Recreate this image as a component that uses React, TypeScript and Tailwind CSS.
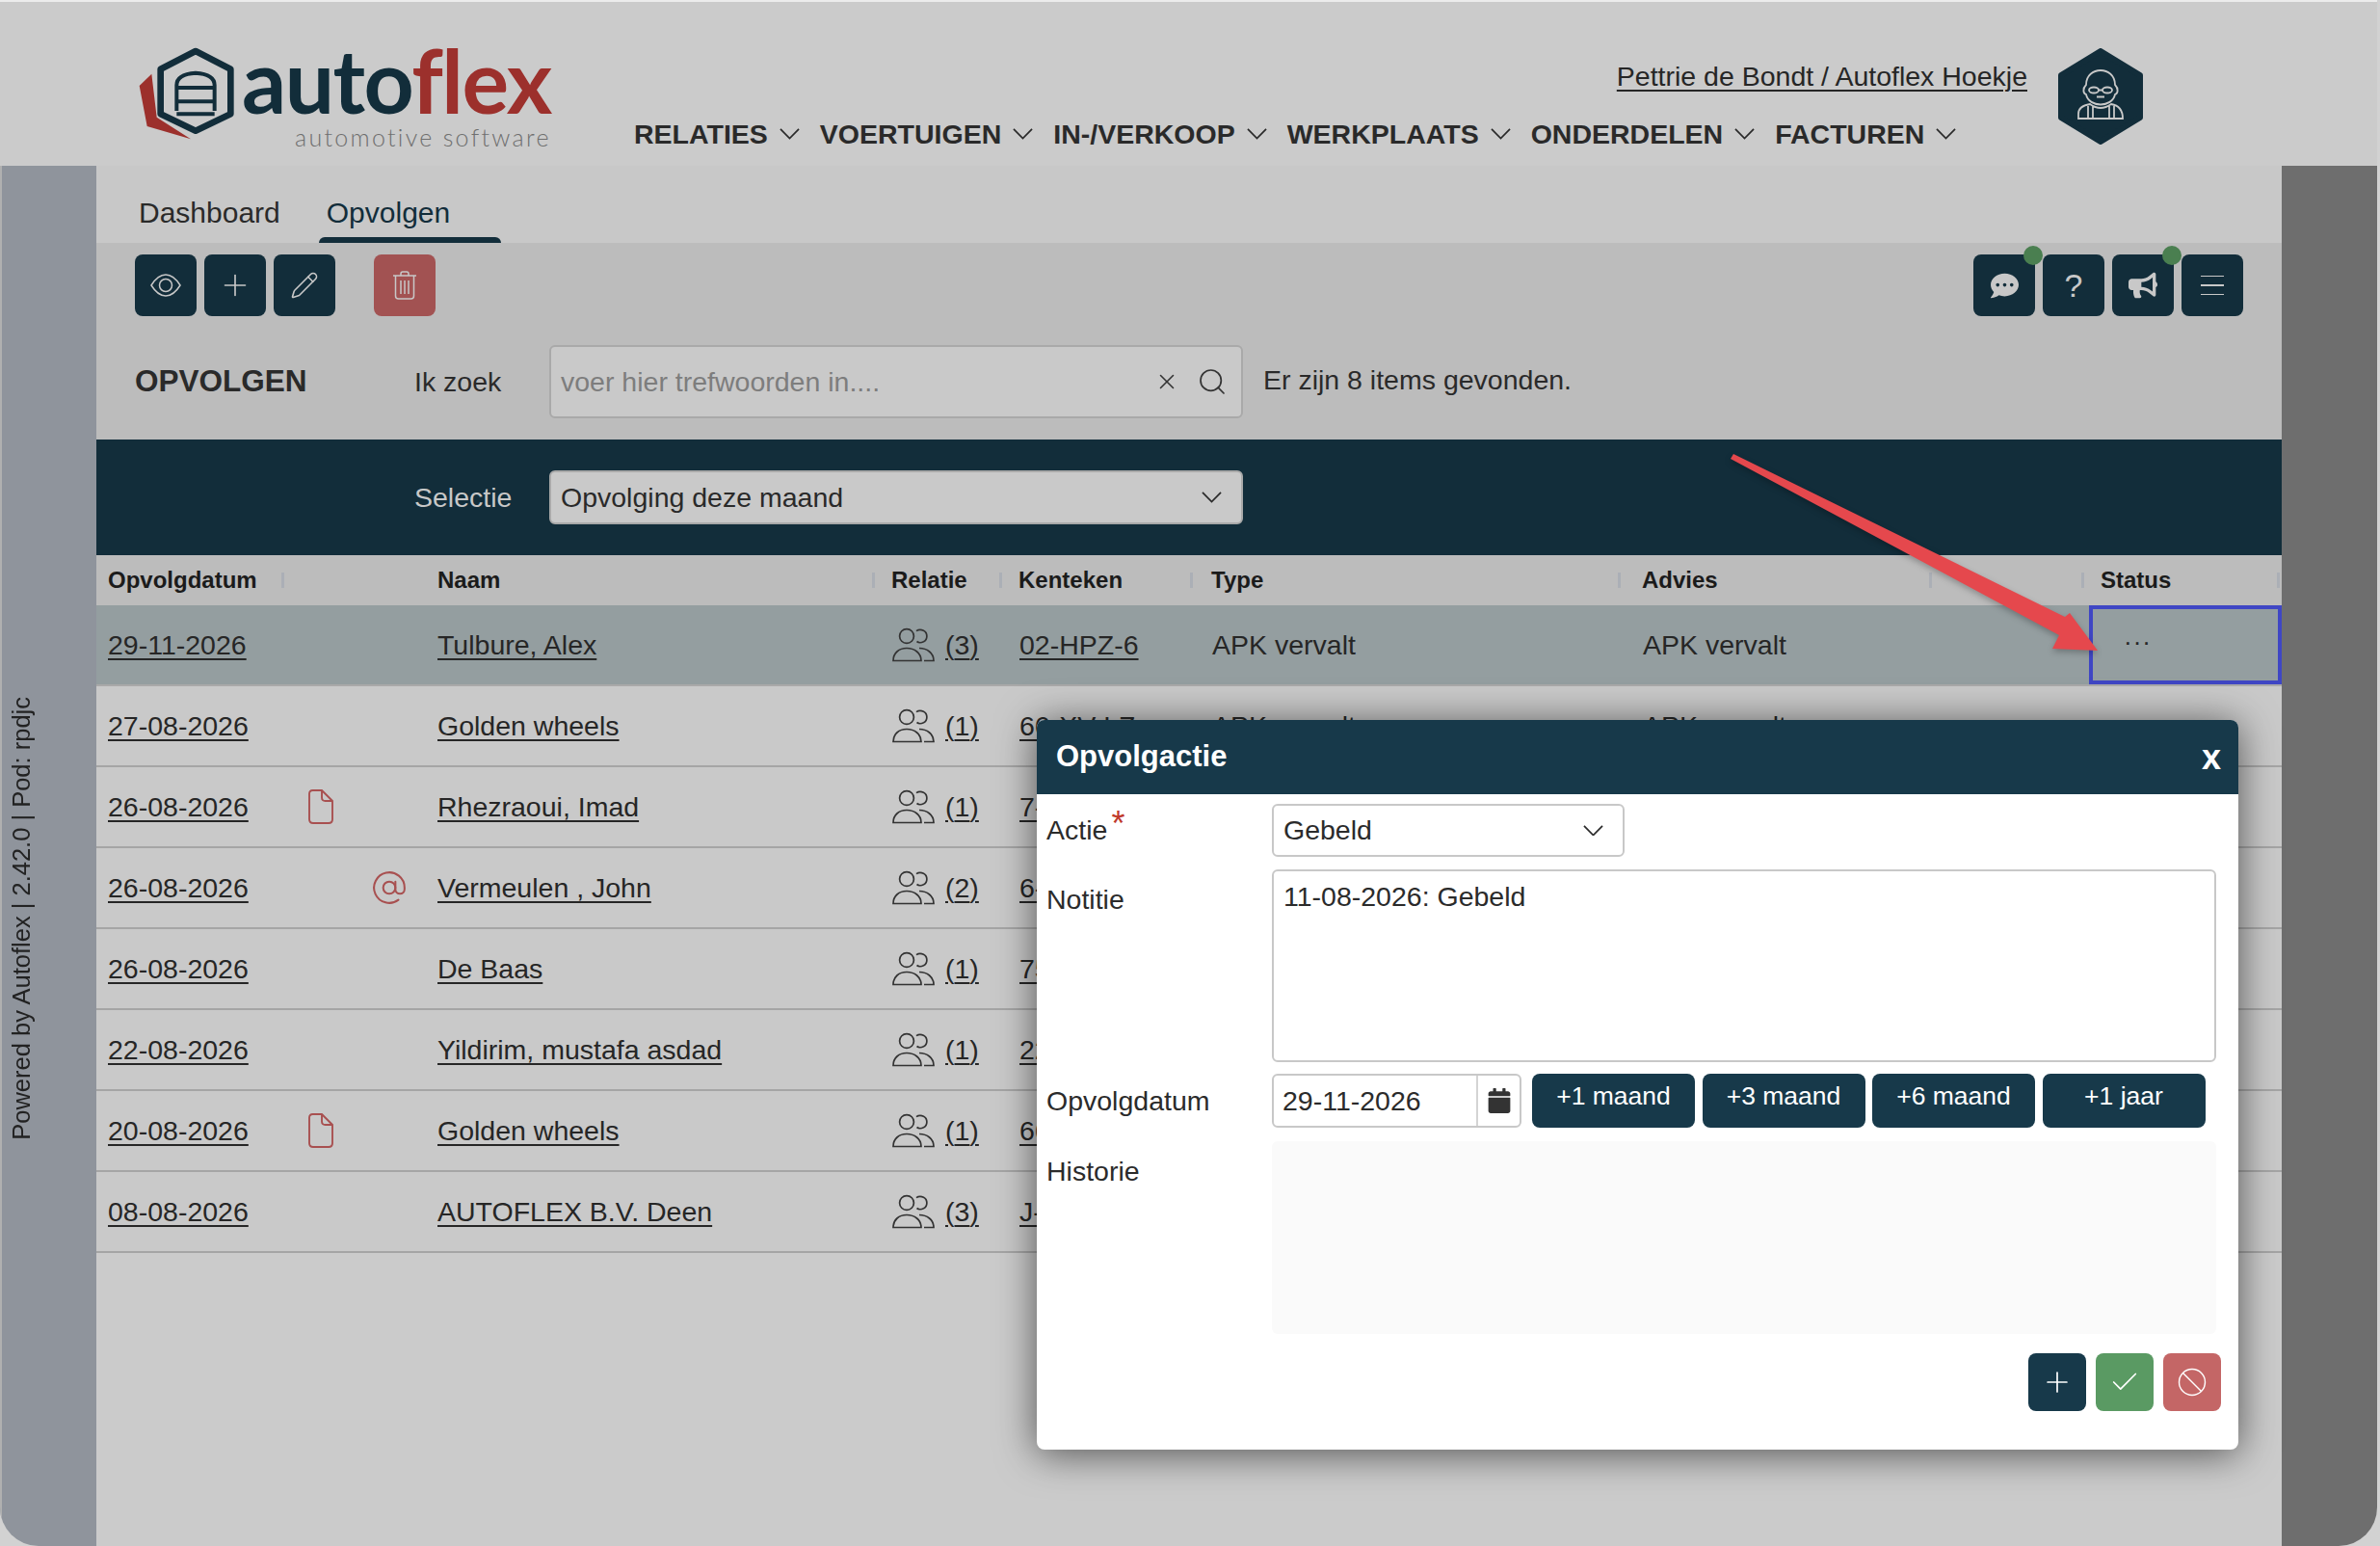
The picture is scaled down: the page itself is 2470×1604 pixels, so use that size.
import { Check, ChevronDown, AtSign, Pencil, Plus, Search, X } from 'lucide-react';
import { FaBullhorn, FaCalendar, FaCommentDots } from 'react-icons/fa';

const rows = [
  { date: '29-11-2026', name: 'Tulbure, Alex', count: 3, plate: '02-HPZ-6', selected: true },
  { date: '27-08-2026', name: 'Golden wheels', count: 1, plate: '66-XV-LZ' },
  { date: '26-08-2026', name: 'Rhezraoui, Imad', count: 1, plate: '7-ZTT-45', file: true },
  { date: '26-08-2026', name: 'Vermeulen , John', count: 2, plate: '6-KVB-12', mail: true },
  { date: '26-08-2026', name: 'De Baas', count: 1, plate: '75-RL-JX' },
  { date: '22-08-2026', name: 'Yildirim, mustafa asdad', count: 1, plate: '22-GN-BF' },
  { date: '20-08-2026', name: 'Golden wheels', count: 1, plate: '66-XV-LZ', file: true },
  { date: '08-08-2026', name: 'AUTOFLEX B.V. Deen', count: 3, plate: 'J-482-VX' },
];

const nav = ['RELATIES', 'VOERTUIGEN', 'IN-/VERKOOP', 'WERKPLAATS', 'ONDERDELEN', 'FACTUREN'];

function Chev({ w = 21 }: { w?: number }) {
  return (
    <svg width={w} height={(w * 12) / 22} viewBox="0 0 22 12" fill="none" stroke="#2a2a2a" strokeWidth="1.8">
      <polyline points="1,1 11,11 21,1" />
    </svg>
  );
}

function Logo() {
  return (
    <div className="flex items-start">
      <svg width="104" height="104" viewBox="60 60 312 312" className="shrink-0">
        <path d="M106 155 L68 192 L92 318 L228 358 L122 290 Z" fill="#9c302c" />
        <path d="M243 84 L352 140 V280 L243 332 L134 280 V140 Z" fill="none" stroke="#122d3a" strokeWidth="20" strokeLinejoin="round" />
        <path d="M184 270 V190 Q184 156 243 152 Q302 156 302 190 V270" fill="none" stroke="#122d3a" strokeWidth="12" />
        <path d="M184 198 H302 M184 241 H302 M184 280 H302" stroke="#122d3a" strokeWidth="12" />
      </svg>
      <div className="ml-[5px] flex flex-col items-end">
        <div className="mt-[-9px] h-[94px] font-['Lato',sans-serif] text-[91px] leading-[94px] font-bold tracking-[-1.5px] whitespace-nowrap">
          <span className="text-[#122d3a]">auto</span>
          <span className="text-[#9c302c]">flex</span>
        </div>
        <div className="mt-[-3px] font-['Lato',sans-serif] text-[25px] leading-[30px] font-light tracking-[2.3px] whitespace-nowrap text-[#6f6f6f]">
          automotive software
        </div>
      </div>
    </div>
  );
}

function Avatar() {
  return (
    <svg width="88" height="100" viewBox="0 0 88 100" fill="none" className="shrink-0">
      <path d="M44 3 L85 28 V72 L44 97 L3 72 V28 Z" fill="#122d3a" stroke="#122d3a" strokeWidth="6" strokeLinejoin="round" />
      <g stroke="#c8c8c8" strokeWidth="1.8">
        <path d="M29 38 C29 18 59 18 59 38 C63 42 62 47 59 48 C56 62 32 62 29 48 C26 47 25 42 29 38 Z" />
        <ellipse cx="37" cy="43.5" rx="5" ry="3" />
        <ellipse cx="51" cy="43.5" rx="5" ry="3" />
        <path d="M42 43.5 H46 M40 50.5 H48" />
        <path d="M21 73 V68 Q21 60 33 58 Q44 66 55 58 Q67 60 67 73 Z M31 60 V73 M36 60 V73 M53 60 V73 M58 60 V73" />
      </g>
    </svg>
  );
}

function ToolButton({ children, red }: { children: React.ReactNode; red?: boolean }) {
  return (
    <div className={`flex h-16 items-center justify-center rounded-lg text-[#c8c8c8] ${red ? 'w-16 bg-[#a25252]' : 'w-16 bg-[#122d3a]'}`}>
      {children}
    </div>
  );
}

function Dot() {
  return <span className="absolute top-[-9px] right-[-8px] h-5 w-5 rounded-full bg-[#4a7f50]" />;
}

function PeopleIcon() {
  return (
    <svg width="44" height="36" viewBox="0 0 44 36" fill="none" stroke="#333" strokeWidth="1.7" className="shrink-0">
      <circle cx="15" cy="9" r="7.4" />
      <path d="M25 3.6 C27 2.2 30 2 32.5 3.2 C37 5.5 37 12.5 32.5 14.8 C30 16 27 15.8 25.5 14.5" />
      <path d="M1 34.5 C1 26.5 7 21.5 15 21.5 C23 21.5 30 26.5 30 34.5 Z" />
      <path d="M28 21.5 C36 21.5 43 26.5 43 34.5 H33" />
    </svg>
  );
}

function FileIcon() {
  return (
    <svg width="26" height="36" viewBox="0 0 26 36" fill="none" stroke="#a85050" strokeWidth="1.9">
      <path d="M4.5 1 H14 L25 12 V31 Q25 35 21 35 H5 Q1 35 1 31 V4.5 Q1 1 4.5 1 Z M14 1 V8.5 Q14 12 17.5 12 H25" />
    </svg>
  );
}

function Sep() {
  return <span className="h-4 w-[3px] shrink-0 bg-[#abafb6]" />;
}

function Table() {
  return (
    <div className="text-[#262626]">
      <div className="grid h-[52px] grid-cols-[200px_142px_471px_132px_200px_447px_476px_200px] items-center bg-[#bcbcbc] text-[24px] font-bold text-[#1b1b1b]">
        <div className="flex items-center justify-between pl-3 pr-[5px]">Opvolgdatum<Sep /></div>
        <div />
        <div className="flex items-center justify-between pl-3 pr-[5px]">Naam<Sep /></div>
        <div className="flex items-center justify-between pl-3 pr-[5px]">Relatie<Sep /></div>
        <div className="flex items-center justify-between pl-3 pr-[7px]">Kenteken<Sep /></div>
        <div className="flex items-center justify-between pl-3 pr-[10px]">Type<Sep /></div>
        <div className="flex items-center pl-3 pr-[5px]">
          <span className="w-[298px]">Advies</span>
          <Sep />
          <span className="flex-1" />
          <Sep />
        </div>
        <div className="flex items-center justify-between pl-3 pr-[2px]">Status<Sep /></div>
      </div>
      {rows.map((r, i) => (
        <div
          key={i}
          className={`grid h-[84px] grid-cols-[342px_471px_132px_200px_447px_476px_200px] items-center border-b-2 text-[28.5px] ${
            r.selected ? 'border-[#a9a9a9] bg-[#949ea0]' : 'border-[#a5a5a5] bg-[#c9c9c9]'
          }`}
        >
          <div className="flex items-center pl-3">
            <span className="w-[208px] underline decoration-2 underline-offset-[4px]">{r.date}</span>
            <span className="w-[65px]">{r.file && <FileIcon />}</span>
            {r.mail && <AtSign size={38} strokeWidth={1.3} color="#a85050" />}
          </div>
          <div className="pl-3 underline decoration-2 underline-offset-[4px]">{r.name}</div>
          <div className="flex items-center pl-[13px]">
            <PeopleIcon />
            <span className="ml-[11px] underline decoration-2 underline-offset-[4px]">({r.count})</span>
          </div>
          <div className="pl-[13px] underline decoration-2 underline-offset-[4px]">{r.plate}</div>
          <div className="pl-[13px]">APK vervalt</div>
          <div className="pl-[13px]">APK vervalt</div>
          {r.selected ? (
            <div className="flex h-full items-center border-4 border-[#3f46c4] pl-[32px] text-[26px] leading-none tracking-[1px] pb-[6px]">···</div>
          ) : (
            <div />
          )}
        </div>
      ))}
    </div>
  );
}

function MonthButton({ label }: { label: string }) {
  return (
    <div className="flex h-14 w-[169px] justify-center rounded-lg bg-[#17394a] pt-[7px] text-[26.5px] leading-[32px] text-white">
      {label}
    </div>
  );
}

function Modal() {
  return (
    <div className="absolute top-[747px] left-[1076px] h-[757px] w-[1247px] overflow-hidden rounded-lg bg-white text-[28.5px] text-[#2b2b2b] shadow-[0_4px_40px_rgba(0,0,0,0.6)]">
      <div className="flex h-[77px] items-center justify-between bg-[#17394a] pr-[18px] pl-5 text-white">
        <span className="text-[31px] font-bold">Opvolgactie</span>
        <span className="text-[36px] leading-none font-bold">x</span>
      </div>
      <div className="pt-[10px] pl-[10px]">
        <div className="flex h-[55px]">
          <div className="flex w-[234px] items-center">
            Actie
            <span className="ml-1 mt-[-14px] text-[36px] leading-none text-[#c0392b]">*</span>
          </div>
          <div className="flex w-[366px] items-center justify-between rounded-md border-2 border-[#c8c8c8] pr-5 pl-[10px]">
            Gebeld
            <Chev />
          </div>
        </div>
        <div className="mt-[13px] flex h-[200px]">
          <div className="w-[234px] pt-[10px]">Notitie</div>
          <div className="w-[980px] rounded-md border-2 border-[#c8c8c8] pt-[5px] pl-[10px]">11-08-2026: Gebeld</div>
        </div>
        <div className="mt-3 flex h-14">
          <div className="flex w-[234px] items-center">Opvolgdatum</div>
          <div className="flex w-[259px] rounded-md border-2 border-[#c8c8c8]">
            <div className="flex w-[212px] items-center border-r-2 border-[#d4d4d4] pl-[9px]">29-11-2026</div>
            <div className="flex flex-1 items-center justify-center text-[#333]">
              <FaCalendar size={26} />
            </div>
          </div>
          <div className="ml-[11px] flex gap-[7.5px]">
            <MonthButton label="+1 maand" />
            <MonthButton label="+3 maand" />
            <MonthButton label="+6 maand" />
            <MonthButton label="+1 jaar" />
          </div>
        </div>
        <div className="mt-[14px] flex h-[200px]">
          <div className="w-[234px] pt-[10px]">Historie</div>
          <div className="w-[980px] rounded-md bg-[#fafafa]" />
        </div>
        <div className="mt-5 flex justify-end gap-[10px] pr-[18px]">
          <div className="flex h-[60px] w-[60px] items-center justify-center rounded-lg bg-[#17394a] text-white">
            <Plus size={34} strokeWidth={1.2} />
          </div>
          <div className="flex h-[60px] w-[60px] items-center justify-center rounded-lg bg-[#5a9a63] text-white">
            <Check size={34} strokeWidth={1.2} />
          </div>
          <div className="flex h-[60px] w-[60px] items-center justify-center rounded-lg bg-[#c46666] text-white">
            <svg width="30" height="30" viewBox="0 0 30 30" fill="none" stroke="#fff" strokeWidth="1.4">
              <circle cx="15" cy="15" r="13.5" />
              <path d="M5.5 5.5 L24.5 24.5" />
            </svg>
          </div>
        </div>
      </div>
    </div>
  );
}

export default function App() {
  return (
    <div className="relative h-[1604px] w-[2470px] overflow-hidden bg-[#d2d2d2] font-['Liberation_Sans',sans-serif]">
      <div className="flex h-full w-[2467px] flex-col overflow-hidden rounded-b-[40px]">
        <header className="flex h-[172px] shrink-0 border-t-2 border-[#ececec] bg-[#cbcbcb] pl-[142px]">
          <div className="w-[516px] pt-[43px]">
            <Logo />
          </div>
          <div className="w-[1446px]">
            <div className="flex justify-end pt-[60px] text-[28.5px] leading-[34px] text-[#262626]">
              <span className="underline decoration-2 underline-offset-[4px]">Pettrie de Bondt / Autoflex Hoekje</span>
            </div>
            <nav className="mt-[26px] flex gap-[21px] text-[28.5px] leading-[34px] font-bold text-[#2a2a2a]">
              {nav.map((n) => (
                <div key={n} className="flex items-center gap-[12px]">
                  {n}
                  <Chev />
                </div>
              ))}
            </nav>
          </div>
          <div className="ml-8 pt-[48px]">
            <Avatar />
          </div>
        </header>

        <div className="flex min-h-0 flex-1">
          <aside className="flex w-[100px] shrink-0 items-end border-l-2 border-[#b0b0b0] bg-[#8f949c] pb-[421px]">
            <span className="rotate-180 pr-[5px] text-[25.5px] leading-[30px] whitespace-nowrap text-[#222] [writing-mode:vertical-rl]">
              Powered by Autoflex | 2.42.0 | Pod: rpdjc
            </span>
          </aside>

          <main className="w-[2268px] shrink-0 bg-[#cbcbcb]">
            <div className="flex h-[80px] items-end gap-[31px] bg-[#c8c8c8] pl-[35px]">
              <div className="px-[9px] pb-[13px] text-[30px] leading-[36px] text-[#2a2a2a]">Dashboard</div>
              <div className="flex flex-col">
                <div className="px-[8px] pb-[7px] text-[30px] leading-[36px] text-[#122d3a]">Opvolgen</div>
                <div className="h-[6px] w-[189px] rounded-t-md bg-[#122d3a]" />
              </div>
            </div>

            <div className="h-[204px] bg-[#bcbcbc] px-10 pt-3">
              <div className="flex justify-between">
                <div className="flex gap-2">
                  <ToolButton>
                    <svg width="34" height="26" viewBox="0 0 34 26" fill="none" stroke="#c8c8c8" strokeWidth="1.5">
                      <path d="M2 13 C7 5 12 2 17 2 C22 2 27 5 32 13 C27 21 22 24 17 24 C12 24 7 21 2 13 Z" />
                      <circle cx="17" cy="13" r="6.5" />
                    </svg>
                  </ToolButton>
                  <ToolButton>
                    <Plus size={36} strokeWidth={1.1} />
                  </ToolButton>
                  <ToolButton>
                    <Pencil size={30} strokeWidth={1.3} />
                  </ToolButton>
                  <div className="ml-8">
                    <ToolButton red>
                      <svg width="26" height="30" viewBox="0 0 26 30" fill="none" stroke="#c8c8c8" strokeWidth="1.5">
                        <path d="M1 5 H25 M9 5 V3 Q9 1 11 1 H15 Q17 1 17 3 V5 M3.5 5 V26 Q3.5 29 6.5 29 H19.5 Q22.5 29 22.5 26 V5 M9 10 V24 M13 10 V24 M17 10 V24" />
                      </svg>
                    </ToolButton>
                  </div>
                </div>
                <div className="flex gap-2">
                  <div className="relative">
                    <ToolButton>
                      <FaCommentDots size={29} />
                    </ToolButton>
                    <Dot />
                  </div>
                  <ToolButton>
                    <span className="text-[34px] leading-none">?</span>
                  </ToolButton>
                  <div className="relative">
                    <ToolButton>
                      <FaBullhorn size={30} />
                    </ToolButton>
                    <Dot />
                  </div>
                  <ToolButton>
                    <div className="flex w-6 flex-col gap-[8px]">
                      <span className="h-[1.5px] bg-[#c8c8c8]" />
                      <span className="h-[1.5px] bg-[#c8c8c8]" />
                      <span className="h-[1.5px] bg-[#c8c8c8]" />
                    </div>
                  </ToolButton>
                </div>
              </div>
              <div className="mt-[30px] flex h-[76px] items-center">
                <div className="w-[290px] text-[31.5px] font-bold text-[#2a2a2a]">OPVOLGEN</div>
                <div className="w-[140px] text-[28.5px] text-[#2a2a2a]">Ik zoek</div>
                <div className="flex h-full w-[720px] items-center rounded-md border-2 border-[#a9a9a9] bg-[#c9c9c9] pr-[14px] pl-[10px]">
                  <span className="flex-1 text-[28.5px] text-[#7d7d7d]">voer hier trefwoorden in....</span>
                  <X size={26} strokeWidth={1.4} color="#333" />
                  <Search size={32} strokeWidth={1.3} color="#333" className="ml-[18px]" />
                </div>
                <div className="ml-[21px] pb-[4px] text-[28.5px] text-[#2a2a2a]">Er zijn 8 items gevonden.</div>
              </div>
            </div>

            <div className="flex h-[120px] items-center bg-[#122d3a] pl-[330px]">
              <div className="w-[140px] text-[28.5px] text-[#c8c8c8]">Selectie</div>
              <div className="flex h-14 w-[720px] items-center justify-between rounded-md border-2 border-[#a9a9a9] bg-[#c9c9c9] pr-5 pl-[10px] text-[28.5px] text-[#2a2a2a]">
                Opvolging deze maand
                <Chev />
              </div>
            </div>

            <Table />
          </main>

          <aside className="flex-1 bg-[#6e6e6e]" />
        </div>
      </div>

      <Modal />

      <svg className="absolute top-0 left-0 drop-shadow-[0_3px_3px_rgba(0,0,0,0.25)]" width="2470" height="1604" viewBox="0 0 2470 1604">
        <polygon points="1796,476 1799,471 2143,640 2148,636 2177,675 2130,673 2137,659" fill="#e5484d" />
      </svg>
    </div>
  );
}
